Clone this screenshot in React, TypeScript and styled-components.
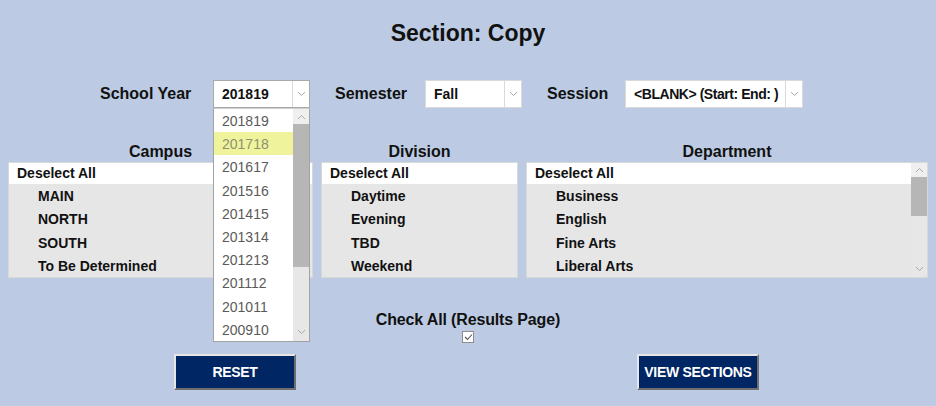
import React from 'react';
import styled, { createGlobalStyle } from 'styled-components';

const GlobalStyle = createGlobalStyle`
  html, body {
    margin: 0;
    padding: 0;
    background: #bccbe3;
  }
  body {
    font-family: "Liberation Sans", Arial, sans-serif;
    color: #111;
  }
`;

const Page = styled.div`
  width: 936px;
  height: 406px;
  overflow: hidden;
  background: #bccbe3;
`;

const Title = styled.h1`
  margin: 0;
  padding-top: 20px;
  font-size: 23px;
  line-height: 26px;
  font-weight: bold;
  text-align: center;
`;

const FilterRow = styled.div`
  margin-top: 34px;
  padding-left: 100px;
  display: grid;
  grid-template-columns: 113px 97px 115px 97px 103px 178px;
  height: 28px;
  align-items: center;
`;

const Label = styled.label<{ $first?: boolean }>`
  padding-left: ${(p) => (p.$first ? '0' : '25px')};
  font-size: 16px;
  font-weight: bold;
  line-height: 28px;
  white-space: nowrap;
`;

const SelectWrap = styled.div`
  position: relative;
  height: 28px;
`;

const SelectBox = styled.div<{ $focused?: boolean }>`
  box-sizing: border-box;
  height: 28px;
  display: flex;
  background: #fff;
  border: 1px solid ${(p) => (p.$focused ? '#a9a9a9' : '#dadada')};
`;

const SelectValue = styled.div<{ $tight?: boolean }>`
  flex: 1;
  padding-left: 8px;
  font-size: 14px;
  font-weight: bold;
  line-height: 26px;
  letter-spacing: ${(p) => (p.$tight ? '-0.45px' : '0')};
  white-space: nowrap;
  overflow: hidden;
`;

const SelectArrow = styled.div`
  width: 16px;
  border-left: 1px solid #dadada;
  display: flex;
  align-items: center;
  justify-content: center;
`;

const Dropdown = styled.div`
  position: absolute;
  top: 28px;
  left: 0;
  z-index: 5;
  box-sizing: border-box;
  width: 97px;
  height: 234px;
  border: 1px solid #a3a3a3;
  border-top-color: #d0d0d0;
  background: #fff;
  display: flex;
`;

const Options = styled.div`
  flex: 1;
  overflow: hidden;
`;

const Option = styled.div<{ $hover?: boolean }>`
  height: 23.2px;
  line-height: 24px;
  padding-left: 8px;
  font-size: 14px;
  color: ${(p) => (p.$hover ? '#8d9170' : '#5a5a5a')};
  background: ${(p) => (p.$hover ? '#eef39c' : '#fff')};
`;

const Scrollbar = styled.div`
  width: 16px;
  background: #e7e7e7;
  display: flex;
  flex-direction: column;
`;

const ScrollArrow = styled.div<{ $h: number; $plain?: boolean }>`
  height: ${(p) => p.$h}px;
  display: flex;
  align-items: center;
  justify-content: center;
  background: ${(p) => (p.$plain ? 'transparent' : '#efefef')};
`;

const Thumb = styled.div<{ $h: number }>`
  height: ${(p) => p.$h}px;
  background: #b6b6b6;
`;

const Spacer = styled.div`
  flex: 1;
`;

const ListsRow = styled.div`
  margin-top: 34px;
  padding: 0 8px;
  display: grid;
  grid-template-columns: 305px 197px 402px;
  column-gap: 8px;
`;

const Column = styled.div`
  display: flex;
  flex-direction: column;
`;

const ColumnHeader = styled.div`
  text-align: center;
  font-size: 16px;
  font-weight: bold;
  line-height: 20px;
`;

const ListBox = styled.div`
  box-sizing: border-box;
  height: 116px;
  border: 1px solid #d8d8d8;
  background: #e6e6e6;
  display: flex;
  overflow: hidden;
`;

const ListItems = styled.div`
  flex: 1;
  overflow: hidden;
`;

const DeselectRow = styled.div`
  height: 21px;
  line-height: 21px;
  padding-left: 8px;
  background: #fff;
  font-size: 14px;
  font-weight: bold;
`;

const ListRow = styled.div`
  height: 23.4px;
  line-height: 24px;
  padding-left: 29px;
  font-size: 14px;
  font-weight: bold;
  white-space: nowrap;
`;

const CheckArea = styled.div`
  margin-top: 33px;
  display: flex;
  flex-direction: column;
  align-items: center;
`;

const CheckLabel = styled.div`
  font-size: 16px;
  font-weight: bold;
  line-height: 18px;
  letter-spacing: -0.15px;
`;

const CheckBox = styled.div`
  box-sizing: border-box;
  margin-top: 2px;
  width: 12px;
  height: 12px;
  border: 1px solid #8e8e8e;
  background: #fff;
  display: flex;
  align-items: center;
  justify-content: center;
`;

const ButtonRow = styled.div`
  margin-top: 11px;
  padding: 0 177px 0 174px;
  display: flex;
  justify-content: space-between;
`;

const Button = styled.button`
  box-sizing: border-box;
  width: 122px;
  height: 36px;
  padding: 0;
  background: #002663;
  border: 2px solid;
  border-color: #e6e6e6 #6f6f6f #6f6f6f #e6e6e6;
  color: #fff;
  font-family: "Liberation Sans", Arial, sans-serif;
  font-size: 14px;
  font-weight: bold;
  letter-spacing: -0.3px;
  cursor: pointer;
`;

const Chevron = ({ up }: { up?: boolean }) => (
  <svg width="9" height="6" viewBox="0 0 9 6">
    <polyline
      points={up ? '1,5 4.5,1.5 8,5' : '1,1 4.5,4.5 8,1'}
      fill="none"
      stroke="#a8a8a8"
      strokeWidth="1"
    />
  </svg>
);

const years = ['201819', '201718', '201617', '201516', '201415', '201314', '201213', '201112', '201011', '200910'];

const lists = [
  { title: 'Campus', items: ['MAIN', 'NORTH', 'SOUTH', 'To Be Determined'], scroll: false },
  { title: 'Division', items: ['Daytime', 'Evening', 'TBD', 'Weekend'], scroll: false },
  { title: 'Department', items: ['Business', 'English', 'Fine Arts', 'Liberal Arts'], scroll: true },
];

export default function App() {
  return (
    <Page>
      <GlobalStyle />
      <Title>Section: Copy</Title>

      <FilterRow>
        <Label $first>School Year</Label>
        <SelectWrap>
          <SelectBox $focused>
            <SelectValue>201819</SelectValue>
            <SelectArrow>
              <Chevron />
            </SelectArrow>
          </SelectBox>
          <Dropdown>
            <Options>
              {years.map((y, i) => (
                <Option key={y} $hover={i === 1}>
                  {y}
                </Option>
              ))}
            </Options>
            <Scrollbar>
              <ScrollArrow $h={15}>
                <Chevron up />
              </ScrollArrow>
              <Thumb $h={143} />
              <Spacer />
              <ScrollArrow $h={18} $plain>
                <Chevron />
              </ScrollArrow>
            </Scrollbar>
          </Dropdown>
        </SelectWrap>
        <Label>Semester</Label>
        <SelectWrap>
          <SelectBox>
            <SelectValue>Fall</SelectValue>
            <SelectArrow>
              <Chevron />
            </SelectArrow>
          </SelectBox>
        </SelectWrap>
        <Label>Session</Label>
        <SelectWrap>
          <SelectBox>
            <SelectValue $tight>&lt;BLANK&gt; (Start: End: )</SelectValue>
            <SelectArrow>
              <Chevron />
            </SelectArrow>
          </SelectBox>
        </SelectWrap>
      </FilterRow>

      <ListsRow>
        {lists.map((l) => (
          <Column key={l.title}>
            <ColumnHeader>{l.title}</ColumnHeader>
            <ListBox>
              <ListItems>
                <DeselectRow>Deselect All</DeselectRow>
                {l.items.map((it) => (
                  <ListRow key={it}>{it}</ListRow>
                ))}
              </ListItems>
              {l.scroll && (
                <Scrollbar>
                  <ScrollArrow $h={14}>
                    <Chevron up />
                  </ScrollArrow>
                  <Thumb $h={39} />
                  <Spacer />
                  <ScrollArrow $h={16} $plain>
                    <Chevron />
                  </ScrollArrow>
                </Scrollbar>
              )}
            </ListBox>
          </Column>
        ))}
      </ListsRow>

      <CheckArea>
        <CheckLabel>Check All (Results Page)</CheckLabel>
        <CheckBox>
          <svg width="9" height="8" viewBox="0 0 9 8">
            <polyline points="1,4 3.5,6.5 8,1.5" fill="none" stroke="#555" strokeWidth="1.1" />
          </svg>
        </CheckBox>
      </CheckArea>

      <ButtonRow>
        <Button>RESET</Button>
        <Button>VIEW SECTIONS</Button>
      </ButtonRow>
    </Page>
  );
}
